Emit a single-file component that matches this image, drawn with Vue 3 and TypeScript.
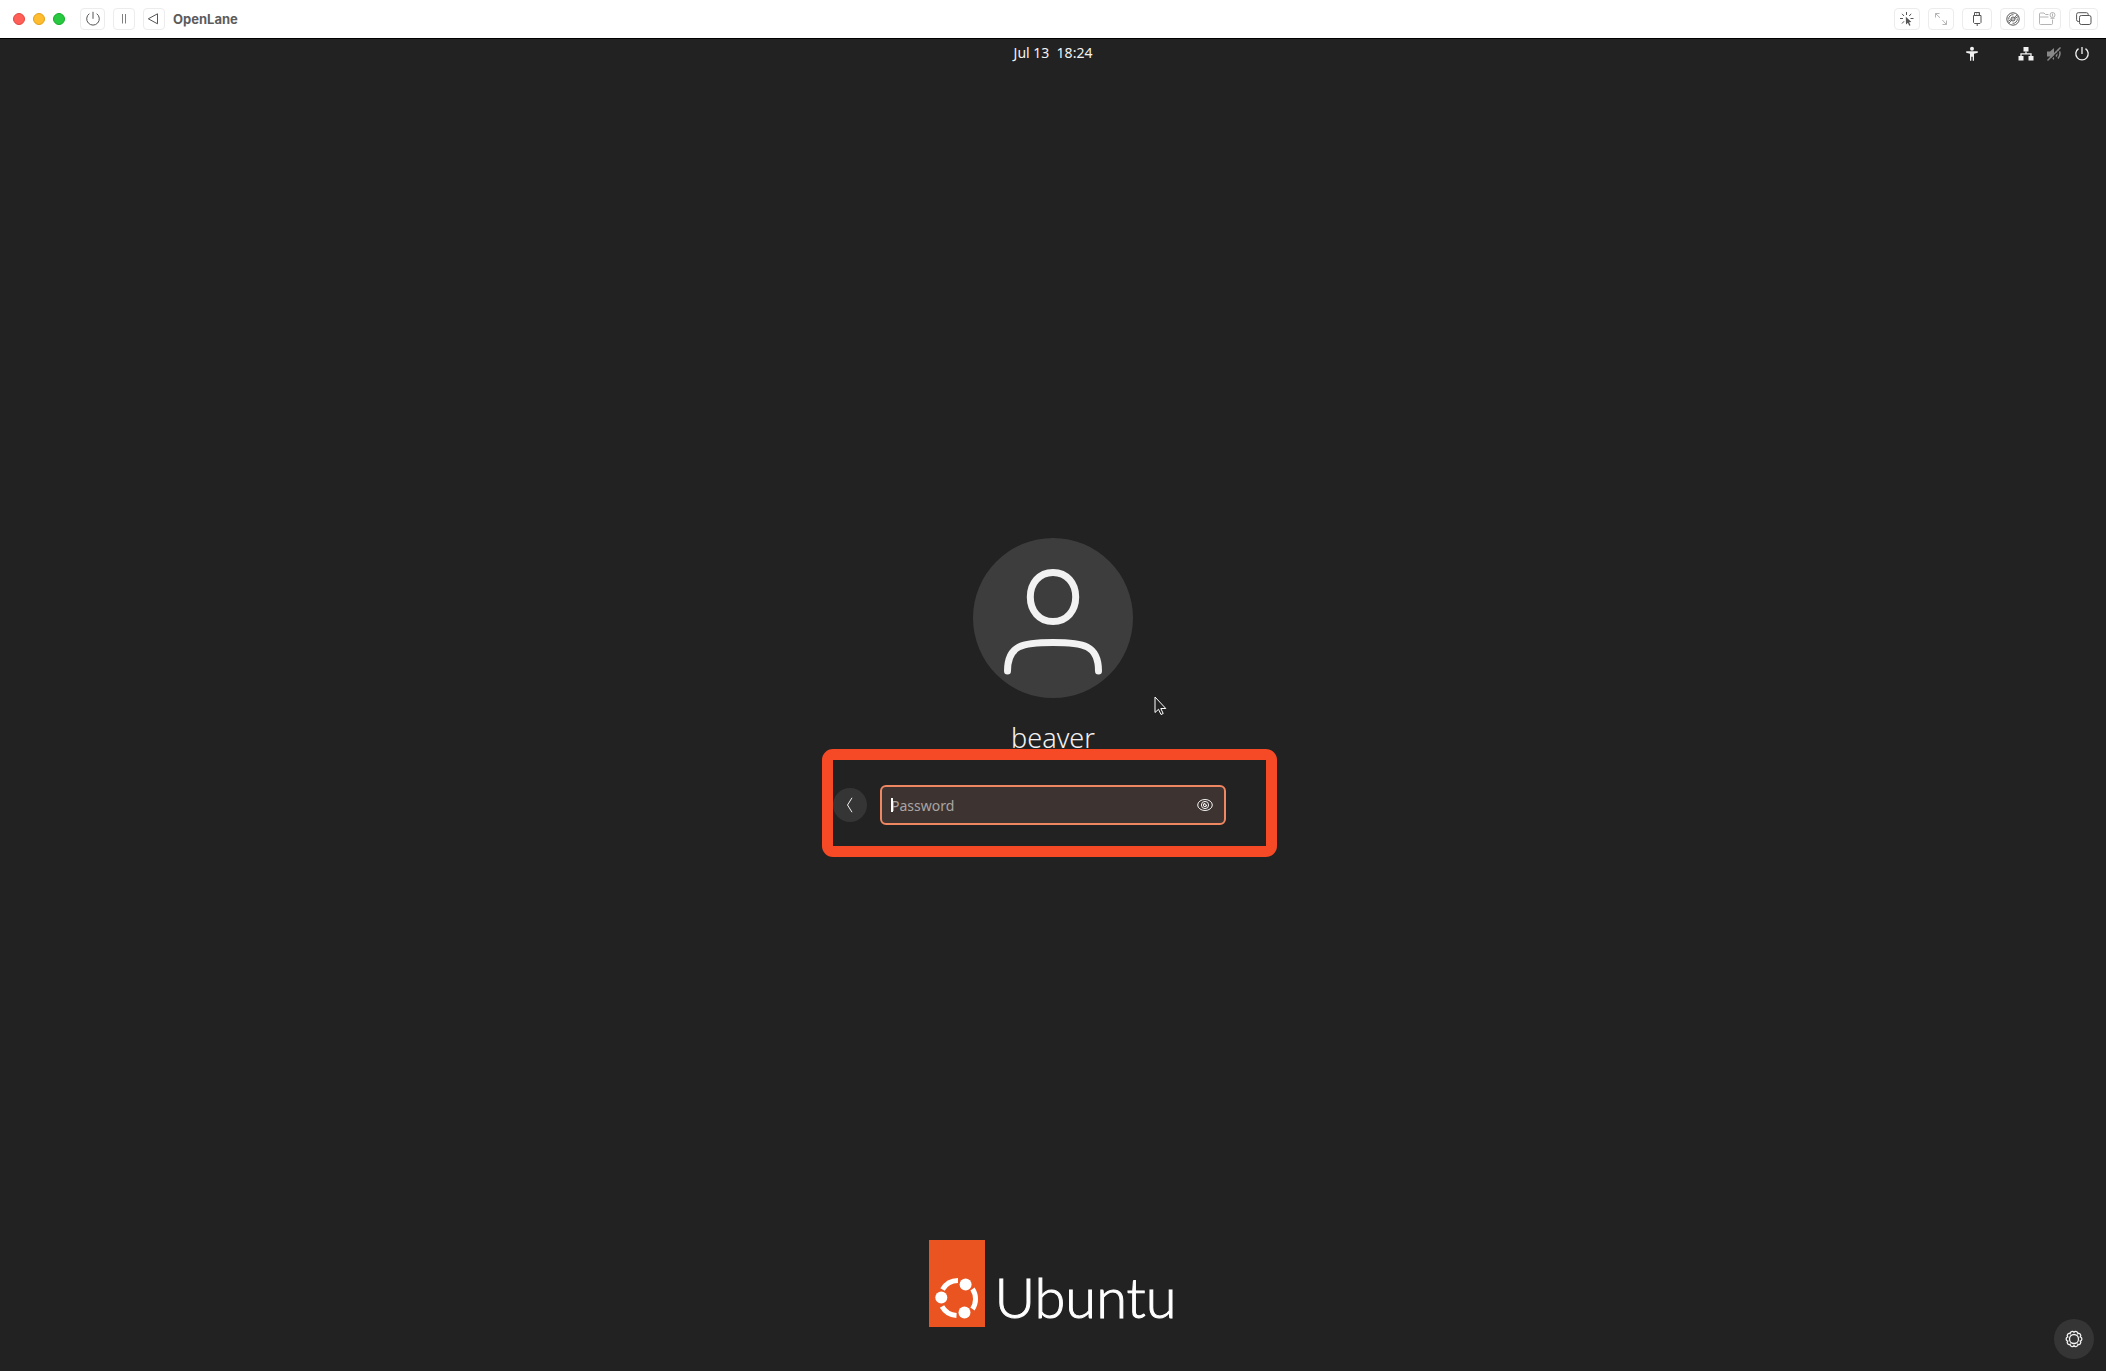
<script setup lang="ts">
import { ref } from 'vue'

const password = ref('')
const reveal = ref(false)
const clock = 'Jul 13  18:24'

// Scalloped outline of the settings cog: ten lobes around the centre.
const cog = Array.from({ length: 10 }, (_, i) => {
  const a = (i * Math.PI) / 5
  const b = a + Math.PI / 5
  const point = (t: number) => `${(9 + 6.6 * Math.sin(t)).toFixed(2)} ${(9 - 6.6 * Math.cos(t)).toFixed(2)}`
  return `${i === 0 ? 'M' + point(a) : ''}A2.1 2.1 0 0 1 ${point(b)}`
}).join('')
</script>

<template>
  <div class="window">
    <header class="titlebar">
      <div class="lights">
        <button class="light red" aria-label="Close"></button>
        <button class="light amber" aria-label="Minimize"></button>
        <button class="light green" aria-label="Zoom"></button>
      </div>
      <div class="tools">
        <button class="tool w25" aria-label="Shut down">
          <svg width="16" height="16" viewBox="0 0 16 16"><path d="M4.3 2.700a6.300 6.300 0 1 0 7.400 0M8 .8v7" /></svg>
        </button>
        <button class="tool w22" aria-label="Pause">
          <svg width="16" height="16" viewBox="0 0 16 16" stroke-opacity=".75"><path d="M6.500 3v9.500M9.500 3v9.500" /></svg>
        </button>
        <button class="tool w22" aria-label="Restart">
          <svg width="16" height="16" viewBox="0 0 16 16"><path d="M11.500 2.800v10L2.300 7.800z" stroke-linejoin="round" /></svg>
        </button>
      </div>
      <h1 class="title">OpenLane</h1>
      <div class="tools right">
        <button class="tool w26" aria-label="Capture pointer">
          <svg width="16" height="16" viewBox="0 0 16 16">
            <path d="M7.500 1v3M3 2.800l2 2.200M12.200 2.800l-2 2.200M1 7.500h3M11.500 7.500h3M3 12.500l2-2.200" />
            <path class="solid" d="M6.800 5.800l5.600 5.200-2.300.2 1.400 3-1.300.6-1.300-3-1.900 1.700z" />
          </svg>
        </button>
        <button class="tool w26 pale" aria-label="Resize display">
          <svg width="16" height="16" viewBox="0 0 16 16"><path d="M2.500 6.500v-4h4M2.500 2.500l4.500 4.300M9.300 9l4.200 4.500M13.500 9.500v4h-4" /></svg>
        </button>
        <button class="tool w30" aria-label="USB devices">
          <svg width="16" height="16" viewBox="0 0 16 16"><path d="M5.500 4.500v-3h5v3M4.500 4.500h7.500v7l-1 1H5.500l-1-1zM8.200 12.500V15M7 3h.7M8.800 3h.7" /></svg>
        </button>
        <button class="tool w25" aria-label="Drive images">
          <svg width="16" height="16" viewBox="0 0 16 16">
            <circle cx="8" cy="8" r="6.200" /><circle cx="8" cy="8" r="2" /><circle cx="8" cy="8" r=".3" />
            <g stroke-width=".9"><path d="M3.700 8.500a4.300 4.300 0 0 1 4.800-4.800M12.300 7.500a4.300 4.300 0 0 1-4.800 4.800M9.300 6.600l3-3M9.800 7.400l3.600-2M6.700 9.400l-3 3M6.200 8.600l-3.600 2" /></g>
          </svg>
        </button>
        <button class="tool w28 pale" aria-label="Shared folder">
          <svg width="18" height="16" viewBox="0 0 18 16">
            <path d="M10.500 3.500h-3L6 2H2.500q-1 0-1 1v9.500q0 1 1 1h11q1 0 1-1v-4M1.500 6h9" />
            <circle cx="14.500" cy="4" r="2.500" /><path d="M14.500 2.500v3M12.500 7.300h4" />
          </svg>
        </button>
        <button class="tool w29" aria-label="Windows">
          <svg width="18" height="16" viewBox="0 0 18 16"><rect x="4.500" y="4.500" width="11.500" height="9" rx="1.800" /><path d="M4.500 10.500H3.300q-1.700 0-1.700-1.700V3.400q0-1.700 1.700-1.700h8.200q1.700 0 1.700 1.700v1.100" /></svg>
        </button>
      </div>
    </header>

    <div class="desktop">
      <nav class="panel">
        <time class="clock">{{ clock }}</time>
        <div class="status">
          <button class="bare a11y" aria-label="Accessibility">
            <svg width="16" height="16" viewBox="0 0 16 16"><circle class="fill" cx="8" cy="2.700" r="2" /><path class="fill" d="M2.200 5.200h11.600v1.600L10 7.700v7.100H8.700v-4H7.300v4H6V7.700L2.200 6.800z" /></svg>
          </button>
          <button class="bare" aria-label="Network">
            <svg width="16" height="16" viewBox="0 0 16 16"><path class="fill" d="M5.500 1h5v4.500h-5zM.5 10h5v4.500h-5zM10.500 10h5v4.500h-5z" /><path d="M8 5.500v2.500M3 10V7.800h10V10" stroke-width="1.300" /></svg>
          </button>
          <button class="bare muted" aria-label="Muted">
            <svg width="16" height="16" viewBox="0 0 16 16"><path class="fill" d="M1 5.500h3L8 2v12l-4-3.500H1z" /><path d="M10 5.500q1.600 2.500 0 5M12 3q4 4.500 0 9.500" stroke-width="1.500" /><path d="M2.500 15.500L15.500 2.500" stroke="#222" stroke-width="1.200" /><path d="M1.500 14.500L14.500 1.500" stroke-width="1.500" /></svg>
          </button>
          <button class="bare" aria-label="Power">
            <svg width="16" height="16" viewBox="0 0 16 16"><path d="M4.500 2.600a6.200 6.200 0 1 0 7 0M8 1v7" stroke-width="1.300" /></svg>
          </button>
        </div>
      </nav>

      <main class="login">
        <div class="avatar">
          <svg width="160" height="160" viewBox="0 0 160 160">
            <path d="M80 34.500c14 0 22.700 11 22.700 24.500S94 83.500 80 83.500 57.300 72.500 57.300 59 66 34.500 80 34.500z" />
            <path d="M34.500 133c0-26 15-28.500 45.500-28.500s45.500 2.500 45.500 28.500" />
          </svg>
        </div>
        <h2 class="name">beaver</h2>
        <form class="row" @submit.prevent>
          <button type="button" class="back" aria-label="Back">
            <svg width="16" height="16" viewBox="0 0 16 16"><path d="M10 .8L5.500 8l4.500 7.200" /></svg>
          </button>
          <div class="field">
            <input v-model="password" :type="reveal ? 'text' : 'password'" placeholder="Password" aria-label="Password" />
            <span v-if="!password" class="caret"></span>
            <button type="button" class="eye" aria-label="Show password" @click="reveal = !reveal">
              <svg width="16" height="16" viewBox="0 0 16 16"><ellipse cx="8" cy="8" rx="7.300" ry="5.500" /><circle cx="8" cy="8" r="3.600" /><path d="M8 6.300v1.700h1.700a1.700 1.700 0 1 1-1.700-1.700" /></svg>
            </button>
          </div>
          <div class="frame"></div>
        </form>
      </main>

      <footer class="brand">
        <div class="tag">
          <svg width="56" height="87" viewBox="0 0 56 87">
            <g class="ring">
              <path d="M13.500 49.500A18 18 0 0 1 29 40.500" />
              <path d="M43.500 49A18 18 0 0 1 43.500 69" />
              <path d="M13 66.500A18 18 0 0 0 27.500 75.500" />
            </g>
            <circle cx="12.300" cy="57.500" r="6" />
            <circle cx="36.600" cy="44.500" r="6" />
            <circle cx="35.500" cy="72.500" r="6" />
          </svg>
        </div>
        <span class="wordmark">Ubuntu</span>
      </footer>

      <button class="gear" aria-label="Session settings">
        <svg width="18" height="18" viewBox="0 0 18 18">
          <path :d="cog" stroke-width="1.300" /><circle cx="9" cy="9" r="4.500" stroke-width="1.300" />
        </svg>
      </button>

      <svg class="pointer" width="14" height="20" viewBox="0 0 14 20"><path d="M1 1v15.500l3.500-3.200L7 18.500l2.200-1-2.400-5h5z" /></svg>
    </div>
  </div>
</template>

<style>
body {
  margin: 0;
  background: #222;
}
</style>

<style scoped>
.window {
  display: flex;
  flex-direction: column;
  min-height: 100vh;
  font-family: "Noto Sans", "Open Sans", sans-serif;
}
button {
  padding: 0;
  border: 0;
  background: none;
}
svg {
  display: block;
  fill: none;
  stroke: currentColor;
}
.titlebar {
  display: flex;
  align-items: center;
  box-sizing: border-box;
  height: 39px;
  padding: 0 8px 0 13px;
  background: #fff;
  border-bottom: 1px solid #000;
}
.lights {
  display: flex;
  gap: 8px;
  margin-right: 15px;
}
.light {
  box-sizing: border-box;
  width: 12px;
  height: 12px;
  border-radius: 50%;
}
.red { background: #ff5f57; border: 1px solid #e2463f; }
.amber { background: #febc2e; border: 1px solid #e1a116; }
.green { background: #28c840; border: 1px solid #12ac28; }
.tools {
  display: flex;
  gap: 8px;
}
.right { margin-left: auto; }
.tool {
  display: flex;
  align-items: center;
  justify-content: center;
  box-sizing: border-box;
  height: 22px;
  border: 1px solid #ececec;
  border-radius: 4px;
  color: #555;
}
.pale { color: #b4b4b4; }
.w22 { width: 22px; }
.w25 { width: 25px; }
.w26 { width: 26px; }
.w28 { width: 28px; }
.w29 { width: 29px; }
.w30 { width: 30px; }
.solid { fill: currentColor; stroke: none; }
.title {
  margin: 0 0 0 8px;
  font: 700 13px/20px Inter, sans-serif;
  color: #5c5c5c;
}
.desktop {
  position: relative;
  display: flex;
  flex: 1;
  flex-direction: column;
  background: #222;
  color: #f2f2f2;
}
.panel {
  display: grid;
  grid-template-columns: 1fr auto 1fr;
  align-items: center;
  height: 30px;
  padding: 0 16px;
}
.clock {
  grid-column: 2;
  padding-bottom: 2px;
  font-size: 14px;
  line-height: 20px;
  white-space: pre;
}
.status {
  display: flex;
  justify-content: flex-end;
  gap: 12px;
}
.bare { color: #f2f2f2; }
.bare .fill { fill: currentColor; stroke: none; }
.a11y { margin-right: 26px; }
.muted { color: #888; }
.login {
  display: flex;
  flex: 1;
  flex-direction: column;
  align-items: center;
  justify-content: center;
  padding-top: 54px;
}
.avatar {
  border-radius: 50%;
  background: #3d3d3d;
  stroke-width: 7px;
  stroke-linecap: round;
}
.name {
  margin: 20px 0 27px;
  font-size: 27px;
  font-weight: 300;
  line-height: 40px;
}
.row {
  position: relative;
  display: flex;
  align-items: center;
  gap: 13px;
  box-sizing: border-box;
  width: 440px;
  padding-right: 47px;
}
.back {
  display: grid;
  place-items: center;
  width: 34px;
  height: 34px;
  border-radius: 50%;
  background: #353535;
  color: #f2f2f2;
}
.field {
  position: relative;
  flex: 1;
}
input {
  display: block;
  box-sizing: border-box;
  width: 100%;
  height: 40px;
  padding: 0 40px 0 9px;
  border: 2px solid #f08763;
  border-radius: 6px;
  outline: 0;
  background: #3d3432;
  color: #f2f2f2;
  font: 14px/20px "Noto Sans", "Open Sans", sans-serif;
}
input::placeholder {
  color: #aaa5a3;
  opacity: 1;
}
.caret {
  position: absolute;
  top: 13px;
  left: 11px;
  width: 2px;
  height: 14px;
  background: #fff;
}
.eye {
  position: absolute;
  top: 12px;
  right: 13px;
  color: #f2f2f2;
}
.frame {
  position: absolute;
  inset: -36px -4px -32px -11px;
  border: 11px solid #f64a26;
  border-radius: 11px;
  pointer-events: none;
}
.brand {
  display: flex;
  align-items: flex-end;
  justify-content: center;
  gap: 9px;
  padding-bottom: 44px;
}
.tag { background: #e95420; }
.tag circle { fill: #fff; stroke: none; }
.ring { stroke: #fff; stroke-width: 5px; }
.wordmark {
  padding-bottom: 2px;
  font-family: Lato, sans-serif;
  font-size: 56px;
  font-weight: 300;
  line-height: 56px;
  color: #fff;
  -webkit-text-stroke: 1px #fff;
}
.gear {
  position: absolute;
  right: 12px;
  bottom: 12px;
  display: grid;
  place-items: center;
  width: 40px;
  height: 40px;
  border-radius: 50%;
  background: #353535;
  color: #f2f2f2;
}
.pointer {
  position: absolute;
  top: 657px;
  left: calc(50% + 101px);
  fill: #222;
  stroke: #fff;
}
</style>
